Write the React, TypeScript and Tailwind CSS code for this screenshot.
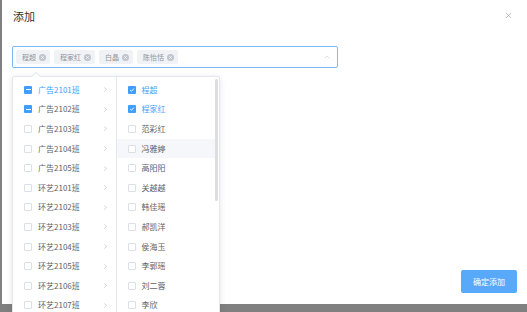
import { ChevronRight, ChevronUp, X } from "lucide-react";

const classes = [
  "广告2101班",
  "广告2102班",
  "广告2103班",
  "广告2104班",
  "广告2105班",
  "环艺2101班",
  "环艺2102班",
  "环艺2103班",
  "环艺2104班",
  "环艺2105班",
  "环艺2106班",
  "环艺2107班",
];

const students = [
  "程超",
  "程家红",
  "范彩红",
  "冯雅婷",
  "高阳阳",
  "关越越",
  "韩佳瑶",
  "郝凯洋",
  "侯海玉",
  "李郭瑶",
  "刘二蓉",
  "李欣",
];

const tags = ["程超", "程家红", "白晶", "陈怡恬"];

function Check({ state }: { state: "none" | "checked" | "half" }) {
  if (state === "none") {
    return <span className="w-[8px] h-[8px] shrink-0 rounded-[1px] border border-[#dcdfe6] bg-white" />;
  }
  return (
    <span className="w-[8px] h-[8px] shrink-0 rounded-[1px] bg-[#409eff] flex items-center justify-center">
      {state === "half" ? (
        <span className="w-[5px] h-[1px] bg-white" />
      ) : (
        <svg width="6" height="6" viewBox="0 0 6 6" fill="none">
          <path d="M1.2 3.1 L2.5 4.3 L4.9 1.6" stroke="white" strokeWidth="0.9" />
        </svg>
      )}
    </span>
  );
}

export default function App() {
  return (
    <div
      className="relative w-[527px] h-[312px] overflow-hidden bg-[#808080]"
      style={{ fontFamily: '"Noto Sans CJK SC", "Noto Sans", sans-serif' }}
    >
      {/* Dialog */}
      <div className="ml-[2px] h-[304px] bg-white flex flex-col">
        <div className="flex items-center justify-between pl-[11px] pr-[14px] pt-[3px] h-[30px]">
          <span className="text-[11px] text-[#303133] leading-none">添加</span>
          <X className="w-[9px] h-[9px] text-[#909399] -mt-[3px]" strokeWidth={1.5} />
        </div>

        <div className="pl-[10px] pt-[16px]">
          <div className="w-[326px] h-[22px] rounded-[2px] border border-[#7fbaf5] flex items-center pl-[3px] pr-[6px]">
            <div className="flex items-center gap-[4px] flex-1">
              {tags.map((t) => (
                <span
                  key={t}
                  className="h-[14px] rounded-[2px] bg-[#f0f2f5] flex items-center gap-[3px] pl-[6px] pr-[4px] text-[7px] text-[#909399] leading-none"
                >
                  {t}
                  <span className="w-[7px] h-[7px] rounded-full bg-[#c0c4cc] flex items-center justify-center">
                    <X className="w-[5px] h-[5px] text-white" strokeWidth={3} />
                  </span>
                </span>
              ))}
            </div>
            <ChevronUp className="w-[8px] h-[8px] text-[#c0c4cc]" strokeWidth={1.5} />
          </div>
        </div>

        <div className="mt-auto flex justify-end pr-[10px] pb-[11px]">
          <button className="w-[56px] h-[23px] rounded-[2px] bg-[#59a9fb] text-white text-[8px] leading-none">
            确定添加
          </button>
        </div>
      </div>

      {/* Cascader dropdown */}
      <div className="absolute left-[12px] top-[76px] w-[208px] h-[250px] bg-white border border-[#e4e7ed] rounded-[2px] shadow-[0_1px_6px_rgba(0,0,0,0.1)] flex">
        <span className="absolute left-[20px] -top-[4px] w-[6px] h-[6px] rotate-45 bg-white border-l border-t border-[#e4e7ed]" />
        <div className="w-[104px] border-r border-[#e4e7ed] pt-[3px]">
          {classes.map((c, i) => (
            <div key={c} className="h-[19.6px] flex items-center pl-[11px] pr-[7px]">
              <Check state={i < 2 ? "half" : "none"} />
              <span
                className={`ml-[6px] flex-1 text-[8px] leading-none ${
                  i === 0 ? "text-[#409eff]" : "text-[#606266]"
                }`}
              >
                {c}
              </span>
              <ChevronRight className="w-[7px] h-[7px] text-[#909399]" strokeWidth={1.5} />
            </div>
          ))}
        </div>
        <div className="relative w-[103px] pt-[3px]">
          {students.map((s, i) => (
            <div
              key={s}
              className={`h-[19.6px] flex items-center pl-[11px] mr-[2px] ${i === 3 ? "bg-[#f5f7fa]" : ""}`}
            >
              <Check state={i < 2 ? "checked" : "none"} />
              <span
                className={`ml-[6px] text-[8px] leading-none ${
                  i < 2 ? "text-[#409eff]" : "text-[#606266]"
                }`}
              >
                {s}
              </span>
            </div>
          ))}
          <span className="absolute right-[1px] top-[2px] w-[3px] h-[122px] rounded-full bg-[#dddee1]" />
        </div>
      </div>
    </div>
  );
}
